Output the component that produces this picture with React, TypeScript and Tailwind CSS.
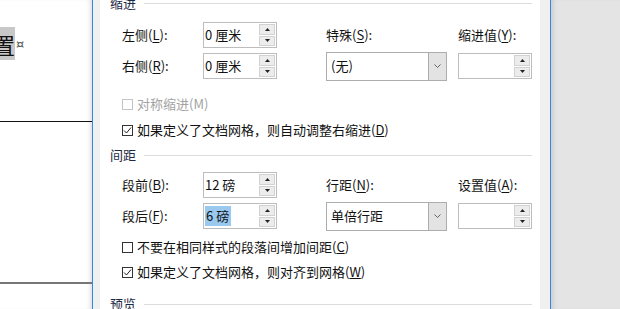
import type { ReactNode } from "react";

function Acc({ text, k }: { text: string; k: string }) {
  return (
    <span>
      {text}(<u className="underline-offset-2">{k}</u>):
    </span>
  );
}

function SpinBtn({ up }: { up?: boolean }) {
  return (
    <div className="flex flex-1 items-center justify-center border border-[#d2d2d2] bg-[#ececec]">
      <svg width="5" height="3" viewBox="0 0 5 3">
        {up ? <path d="M0 3 L2.5 0 L5 3 Z" fill="#222" /> : <path d="M0 0 L2.5 3 L5 0 Z" fill="#222" />}
      </svg>
    </div>
  );
}

function Spin({ value, selected }: { value?: string; selected?: boolean }) {
  return (
    <div className="flex h-[26px] w-[74px] border border-[#bdbdbd] bg-white">
      <div className="flex flex-1 items-center pl-[1px] text-[13px] text-[#111]">
        {selected ? <span className="bg-[#99c9ef] pr-[2px] pl-[1px]">{value}</span> : value}
      </div>
      <div className="flex w-[18px] flex-col gap-px p-px">
        <SpinBtn up />
        <SpinBtn />
      </div>
    </div>
  );
}

function Dropdown({ value }: { value: string }) {
  return (
    <div className="flex h-[29px] w-[121px] border border-[#adadad] bg-white">
      <div className="flex flex-1 items-center pl-[4px] text-[13px] text-[#111]">{value}</div>
      <div className="flex w-[18px] items-center justify-center border-l border-[#adadad] bg-[#e3e3e3]">
        <svg width="7" height="4" viewBox="0 0 7 4">
          <path d="M0.5 0.5 L3.5 3.5 L6.5 0.5" fill="none" stroke="#555" strokeWidth="0.9" />
        </svg>
      </div>
    </div>
  );
}

function Check({ checked, disabled, children }: { checked?: boolean; disabled?: boolean; children: ReactNode }) {
  return (
    <div className={`flex h-[18px] items-center gap-[4px] pl-[22px] text-[13px] ${disabled ? "text-[#a3a3a3]" : "text-[#111]"}`}>
      <div
        className={`flex h-[11px] w-[11px] items-center justify-center border bg-white ${disabled ? "border-[#c4c4c4]" : "border-[#333]"}`}
      >
        {checked && (
          <svg width="9" height="9" viewBox="0 0 9 9">
            <path d="M1 4.5 L3.5 7 L8 1.5" fill="none" stroke="#222" strokeWidth="1" />
          </svg>
        )}
      </div>
      <span>{children}</span>
    </div>
  );
}

function Header({ title }: { title: string }) {
  return (
    <div className="flex h-[16px] items-center gap-[8px] pl-[10px] pr-[8px] text-[13px] text-[#1e2a44]">
      <span>{title}</span>
      <div className="h-px flex-1 bg-[#dcdcdc]" />
    </div>
  );
}

function Group({
  a,
  b,
  midLabel,
  rightLabel,
  mid,
  right,
}: {
  a: ReactNode;
  b: ReactNode;
  midLabel: ReactNode;
  rightLabel: ReactNode;
  mid: ReactNode;
  right: ReactNode;
}) {
  return (
    <div className="flex pl-[22px] text-[13px] text-[#111]">
      <div className="flex w-[155px] flex-col gap-[5px]">{a}{b}</div>
      <div className="ml-[49px] flex flex-col gap-[5px]">
        <div className="flex h-[26px] items-center">
          <div className="w-[132px]">{midLabel}</div>
          <div>{rightLabel}</div>
        </div>
        <div className="flex h-[26px] items-center gap-[11px]">
          {mid}
          {right}
        </div>
      </div>
    </div>
  );
}

function LabeledSpin({ label, value, selected }: { label: ReactNode; value: string; selected?: boolean }) {
  return (
    <div className="flex h-[26px] items-center">
      <div className="w-[81px]">{label}</div>
      <Spin value={value} selected={selected} />
    </div>
  );
}

export default function App() {
  return (
    <div className="flex h-[309px] w-[620px] overflow-hidden bg-white font-['Noto_Sans_CJK_SC','Microsoft_YaHei',sans-serif]">
      {/* document behind the dialog */}
      <div className="flex w-[92px] flex-col bg-white shadow-[inset_-4px_0_4px_-2px_rgba(0,0,0,0.12)]">
        <div className="mt-[27px] flex h-[33px] items-center">
          <div className="flex h-[33px] w-[15px] items-center justify-end overflow-hidden bg-[#c8c8c8]">
            <span className="text-[22px] leading-none text-[#111]">置</span>
          </div>
          <span className="ml-[1px] font-['DejaVu_Sans',sans-serif] text-[13px] leading-none text-[#555]">¤</span>
        </div>
        <div className="mt-[61px] h-px bg-[#111]" />
        <div className="mt-[160px] h-[2px] bg-[#777]" />
      </div>

      {/* dialog */}
      <div className="flex border-x border-[#3389e0] bg-[#f0f0f0] pl-[7px] pr-[10px]">
        <div className="flex w-[440px] flex-col bg-white">
          <div className="-mt-[5px]">
            <Header title="缩进" />
          </div>
          <div className="mt-[11px]">
            <Group
              a={<LabeledSpin label={<Acc text="左侧" k="L" />} value="0 厘米" />}
              b={<LabeledSpin label={<Acc text="右侧" k="R" />} value="0 厘米" />}
              midLabel={<Acc text="特殊" k="S" />}
              rightLabel={<Acc text="缩进值" k="Y" />}
              mid={<Dropdown value="(无)" />}
              right={<Spin />}
            />
          </div>
          <div className="mt-[16px]">
            <Check disabled>对称缩进(M)</Check>
          </div>
          <div className="mt-[8px]">
            <Check checked>
              如果定义了文档网格，则自动调整右缩进(<u>D</u>)
            </Check>
          </div>
          <div className="mt-[8px]">
            <Header title="间距" />
          </div>
          <div className="mt-[9px]">
            <Group
              a={<LabeledSpin label={<Acc text="段前" k="B" />} value="12 磅" />}
              b={<LabeledSpin label={<Acc text="段后" k="F" />} value="6 磅" selected />}
              midLabel={<Acc text="行距" k="N" />}
              rightLabel={<Acc text="设置值" k="A" />}
              mid={<Dropdown value="单倍行距" />}
              right={<Spin />}
            />
          </div>
          <div className="mt-[9px]">
            <Check>
              不要在相同样式的段落间增加间距(<u>C</u>)
            </Check>
          </div>
          <div className="mt-[7px]">
            <Check checked>
              如果定义了文档网格，则对齐到网格(<u>W</u>)
            </Check>
          </div>
          <div className="mt-[15px]">
            <Header title="预览" />
          </div>
        </div>
      </div>

      {/* backdrop to the right */}
      <div className="flex-1 bg-[#e4e4e4] shadow-[inset_5px_0_5px_-3px_rgba(0,0,0,0.12)]" />
    </div>
  );
}
